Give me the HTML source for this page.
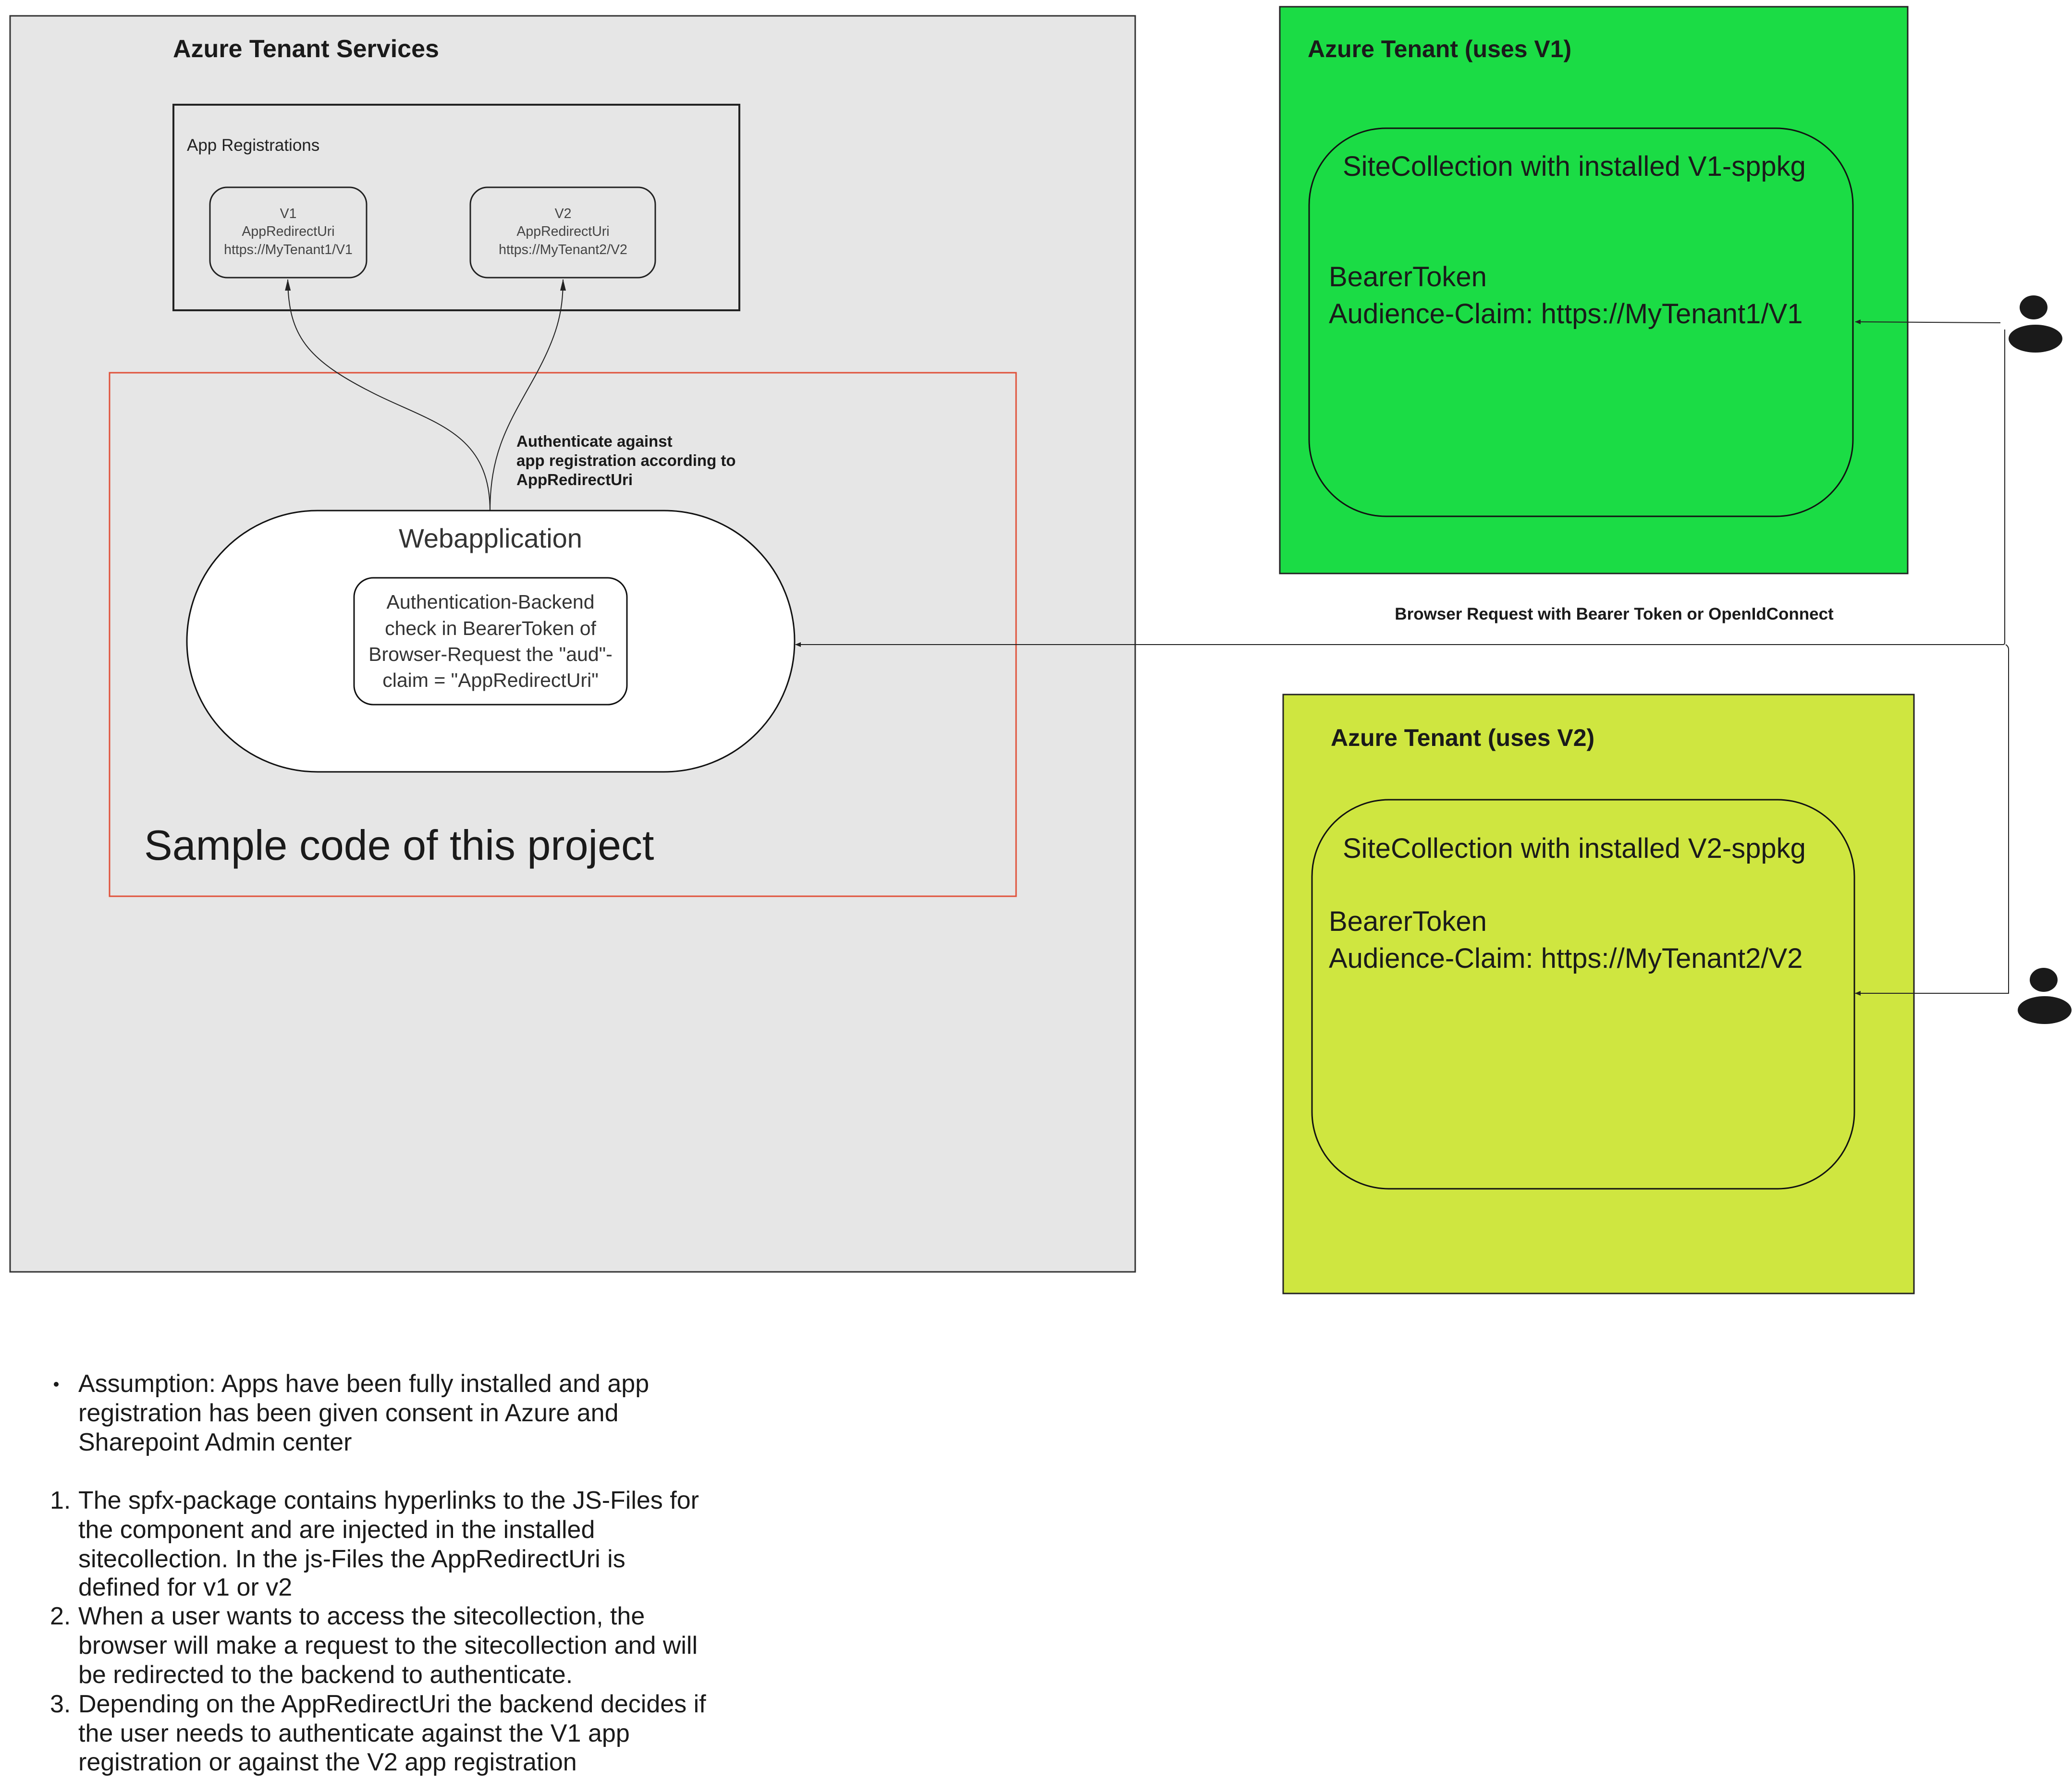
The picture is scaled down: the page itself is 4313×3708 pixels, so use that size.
<!DOCTYPE html>
<html><head><meta charset="utf-8"><style>html,body{margin:0;padding:0;background:#fff}svg{display:block}</style></head>
<body>
<svg width="4313" height="3708" viewBox="0 0 4313 3708" xmlns="http://www.w3.org/2000/svg" font-family="Liberation Sans, sans-serif">
<defs>
<marker id="ar" markerWidth="12" markerHeight="10" refX="11" refY="5" orient="auto" markerUnits="userSpaceOnUse"><path d="M0,0 L12,5 L0,10 z" fill="#222"/></marker>
<marker id="ar2" markerWidth="24" markerHeight="12" refX="23" refY="6" orient="auto" markerUnits="userSpaceOnUse"><path d="M0,0 L24,6 L0,12 z" fill="#222"/></marker>
</defs>
<rect width="4313" height="3708" fill="#fff"/>
<rect x="21" y="33" width="2342" height="2615" fill="#e6e6e6" stroke="#333" stroke-width="3"/>
<text x="360" y="119" font-size="52" font-weight="bold" fill="#1a1a1a">Azure Tenant Services</text>
<rect x="361" y="218" width="1178" height="428" fill="none" stroke="#222" stroke-width="4"/>
<text x="389" y="314" font-size="35" fill="#222">App Registrations</text>
<rect x="437" y="390" width="326" height="188" rx="36" fill="none" stroke="#222" stroke-width="3"/>
<rect x="979" y="390" width="385" height="188" rx="36" fill="none" stroke="#222" stroke-width="3"/>
<g font-size="28.5" fill="#444" text-anchor="middle">
<text x="600" y="454">V1</text><text x="600" y="491">AppRedirectUri</text><text x="600" y="529">https://MyTenant1/V1</text>
<text x="1172" y="454">V2</text><text x="1172" y="491">AppRedirectUri</text><text x="1172" y="529">https://MyTenant2/V2</text>
</g>
<rect x="228" y="776" width="1887" height="1090" fill="none" stroke="#e0513a" stroke-width="3"/>
<path d="M1020,1064 C1020,900 900,880 780,820 C640,750 600,700 599,582" fill="none" stroke="#222" stroke-width="2" marker-end="url(#ar2)"/>
<path d="M1020,1064 C1020,940 1060,880 1110,790 C1160,700 1172,650 1172,582" fill="none" stroke="#222" stroke-width="2" marker-end="url(#ar2)"/>
<g font-size="33" font-weight="bold" fill="#1a1a1a">
<text x="1075" y="930">Authenticate against</text><text x="1075" y="970">app registration according to</text><text x="1075" y="1010">AppRedirectUri</text>
</g>
<rect x="389" y="1063" width="1265" height="544" rx="272" fill="#fff" stroke="#111" stroke-width="3"/>
<text x="1021" y="1140" font-size="56" fill="#333" text-anchor="middle">Webapplication</text>
<rect x="737" y="1203" width="568" height="264" rx="40" fill="#fff" stroke="#111" stroke-width="3"/>
<g font-size="41" fill="#333" text-anchor="middle">
<text x="1021" y="1267">Authentication-Backend</text><text x="1021" y="1322">check in BearerToken of</text><text x="1021" y="1376">Browser-Request the "aud"-</text><text x="1021" y="1430">claim = "AppRedirectUri"</text>
</g>
<text x="300" y="1790" font-size="88" fill="#1a1a1a">Sample code of this project</text>
<rect x="2664" y="14" width="1307" height="1180" fill="#1bdc45" stroke="#222" stroke-width="3"/>
<text x="2722" y="119" font-size="50" font-weight="bold" fill="#1a1a1a">Azure Tenant (uses V1)</text>
<rect x="2725" y="267" width="1132" height="808" rx="160" fill="none" stroke="#111" stroke-width="3"/>
<g font-size="58" fill="#1a1a1a">
<text x="2795" y="366">SiteCollection with installed V1-sppkg</text>
<text x="2766" y="596">BearerToken</text><text x="2766" y="673">Audience-Claim: https://MyTenant1/V1</text>
</g>
<rect x="2671" y="1446" width="1313" height="1247" fill="#cfe640" stroke="#222" stroke-width="3"/>
<text x="2770" y="1553" font-size="50" font-weight="bold" fill="#1a1a1a">Azure Tenant (uses V2)</text>
<rect x="2731" y="1665" width="1129" height="810" rx="160" fill="none" stroke="#111" stroke-width="3"/>
<g font-size="58" fill="#1a1a1a">
<text x="2795" y="1786">SiteCollection with installed V2-sppkg</text>
<text x="2766" y="1938">BearerToken</text><text x="2766" y="2015">Audience-Claim: https://MyTenant2/V2</text>
</g>
<path d="M4164,672 L3862,670" fill="none" stroke="#222" stroke-width="2" marker-end="url(#ar)"/>
<path d="M4173,686 L4173,1338 Q4173,1342 4169,1342 L1656,1342" fill="none" stroke="#222" stroke-width="2" marker-end="url(#ar)"/>
<path d="M4175,1342 Q4181,1346 4181,1352 L4181,2068 L3862,2068" fill="none" stroke="#222" stroke-width="2" marker-end="url(#ar)"/>
<text x="3360" y="1290" font-size="35" font-weight="bold" fill="#1a1a1a" text-anchor="middle">Browser Request with Bearer Token or OpenIdConnect</text>
<g fill="#1a1a1a">
<ellipse cx="4233" cy="640" rx="29" ry="25"/><ellipse cx="4237" cy="705" rx="56" ry="29"/>
<ellipse cx="4254" cy="2040" rx="29" ry="25"/><ellipse cx="4256" cy="2103" rx="56" ry="29"/>
</g>
<g font-size="52" fill="#1a1a1a">
<circle cx="117" cy="2882" r="5"/>
<text x="163" y="2898">Assumption: Apps have been fully installed and app</text>
<text x="163" y="2959">registration has been given consent in Azure and</text>
<text x="163" y="3020">Sharepoint Admin center</text>
<text x="104" y="3141">1.</text><text x="163" y="3141">The spfx-package contains hyperlinks to the JS-Files for</text>
<text x="163" y="3202">the component and are injected in the installed</text>
<text x="163" y="3263">sitecollection. In the js-Files the AppRedirectUri is</text>
<text x="163" y="3322">defined for v1 or v2</text>
<text x="104" y="3382">2.</text><text x="163" y="3382">When a user wants to access the sitecollection, the</text>
<text x="163" y="3443">browser will make a request to the sitecollection and will</text>
<text x="163" y="3504">be redirected to the backend to authenticate.</text>
<text x="104" y="3565">3.</text><text x="163" y="3565">Depending on the AppRedirectUri the backend decides if</text>
<text x="163" y="3626">the user needs to authenticate against the V1 app</text>
<text x="163" y="3686">registration or against the V2 app registration</text>
</g>
</svg>
</body></html>
